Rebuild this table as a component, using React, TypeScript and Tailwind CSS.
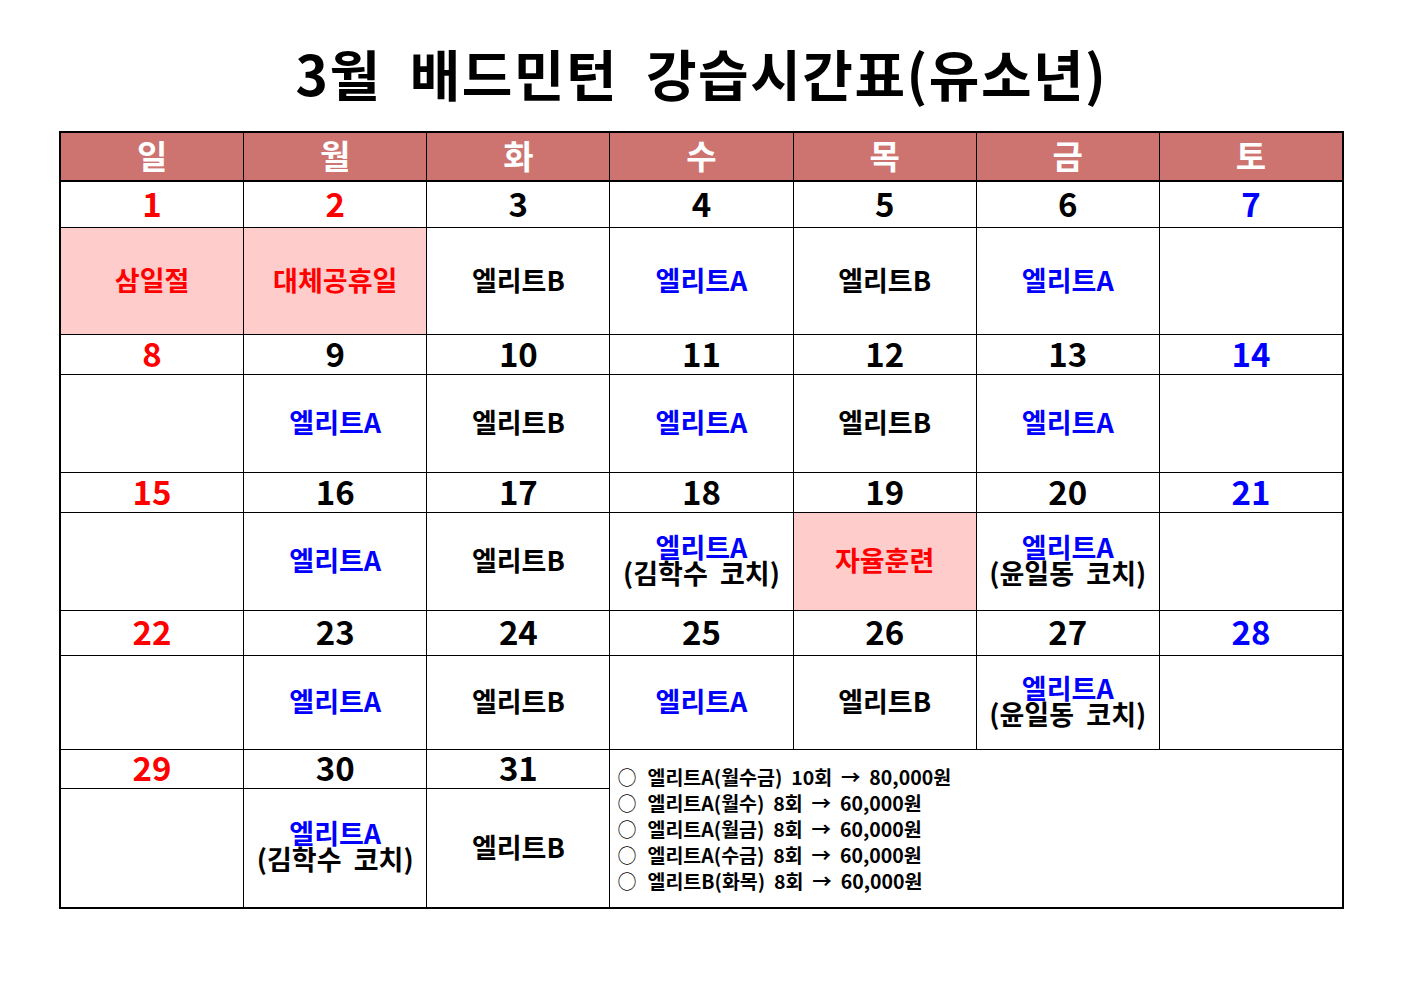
import React from 'react';

type Cell = { text?: string; sub?: string; kind?: 'holiday' | 'blue' | 'black' | 'rest' };

const days = ['일', '월', '화', '수', '목', '금', '토'];

const A: Cell = { text: '엘리트A', kind: 'blue' };
const B: Cell = { text: '엘리트B', kind: 'black' };
const E: Cell = {};

// red dates: sundays plus holidays
const redDates = [2];

const weeks: { start: number; rowH: string; dateH: string; cells: Cell[] }[] = [
  {
    start: 1,
    dateH: 'h-[45px]',
    rowH: 'h-[106px]',
    cells: [
      { text: '삼일절', kind: 'holiday' },
      { text: '대체공휴일', kind: 'holiday' },
      B, A, B, A, E,
    ],
  },
  { start: 8, dateH: 'h-[39px]', rowH: 'h-[97px]', cells: [E, A, B, A, B, A, E] },
  {
    start: 15,
    dateH: 'h-[39px]',
    rowH: 'h-[97px]',
    cells: [
      E, A, B,
      { text: '엘리트A', sub: '(김학수  코치)', kind: 'blue' },
      { text: '자율훈련', kind: 'rest' },
      { text: '엘리트A', sub: '(윤일동  코치)', kind: 'blue' },
      E,
    ],
  },
  {
    start: 22,
    dateH: 'h-[44px]',
    rowH: 'h-[93px]',
    cells: [E, A, B, A, B, { text: '엘리트A', sub: '(윤일동  코치)', kind: 'blue' }, E],
  },
];

const legend = [
  '엘리트A(월수금)  10회  →  80,000원',
  '엘리트A(월수)  8회  →  60,000원',
  '엘리트A(월금)  8회  →  60,000원',
  '엘리트A(수금)  8회  →  60,000원',
  '엘리트B(화목)  8회  →  60,000원',
];

const dateColor = (n: number, col: number) =>
  col === 0 || redDates.includes(n) ? 'text-[#ff0000]' : col === 6 ? 'text-[#0000ff]' : 'text-black';

const DateCell: React.FC<{ n: number; col: number; h: string }> = ({ n, col, h }) => (
  <div className={`bg-white flex items-center justify-center text-[33px] font-bold leading-none pb-[3px] ${h} ${dateColor(n, col)}`}>
    {n}
  </div>
);

const ContentCell: React.FC<{ c: Cell; h: string }> = ({ c, h }) => {
  const bg = c.kind === 'holiday' || c.kind === 'rest' ? 'bg-[#ffcccc]' : 'bg-white';
  const color =
    c.kind === 'holiday' || c.kind === 'rest'
      ? 'text-[#ff0000]'
      : c.kind === 'blue'
        ? 'text-[#0000ff]'
        : 'text-black';
  return (
    <div className={`${bg} ${h} flex flex-col items-center justify-center font-bold text-[27px] pb-[3px]`}>
      {c.text && <div className={`${color} leading-[24px] whitespace-pre`}>{c.text}</div>}
      {c.sub && <div className="text-black leading-[27px] whitespace-pre">{c.sub}</div>}
    </div>
  );
};

export default function App() {
  return (
    <div
      className="w-[1403px] h-[992px] bg-white pt-[37px] flex flex-col items-center"
      style={{ fontFamily: '"Noto Sans CJK KR", "Noto Sans", sans-serif' }}
    >
      <h1 className="text-[55px] font-bold leading-[70px] text-black whitespace-pre tracking-[1.5px]">
        3월  배드민턴  강습시간표(유소년)
      </h1>

      <div className="mt-[24px] w-[1285px] border-2 border-black bg-black grid grid-cols-7 gap-px">
        {days.map((d) => (
          <div
            key={d}
            className="h-[48px] bg-[#cd7370] border-b border-black flex items-center justify-center text-white text-[33px] font-bold leading-none pb-[3px]"
          >
            {d}
          </div>
        ))}

        {weeks.map((w) => (
          <React.Fragment key={w.start}>
            {w.cells.map((_, i) => (
              <DateCell key={'d' + i} n={w.start + i} col={i} h={w.dateH} />
            ))}
            {w.cells.map((c, i) => (
              <ContentCell key={'c' + i} c={c} h={w.rowH} />
            ))}
          </React.Fragment>
        ))}

        {/* last week + fee notes */}
        <DateCell n={29} col={0} h="h-[38px]" />
        <DateCell n={30} col={1} h="h-[38px]" />
        <DateCell n={31} col={2} h="h-[38px]" />
        <div className="col-span-4 row-span-2 bg-white flex flex-col justify-center pl-[7px]">
          {legend.map((l) => (
            <div key={l} className="flex items-center text-[19.5px] font-bold leading-[26px] text-black whitespace-pre">
              <span className="font-normal text-[19px] mr-[11px]">○</span>
              {l}
            </div>
          ))}
        </div>
        <div className="bg-white h-[118px]" />
        <ContentCell c={{ text: '엘리트A', sub: '(김학수  코치)', kind: 'blue' }} h="h-[118px]" />
        <ContentCell c={B} h="h-[118px]" />
      </div>
    </div>
  );
}
